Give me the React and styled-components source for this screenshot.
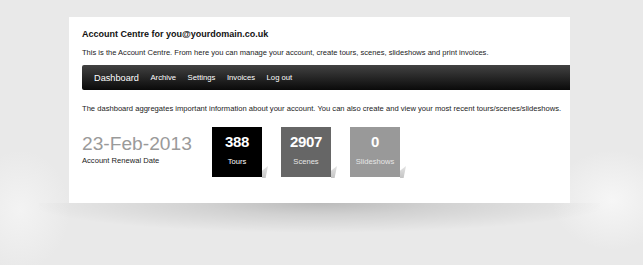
import React from 'react'
import styled, { createGlobalStyle } from 'styled-components'

const Global = createGlobalStyle`
  html, body {
    margin: 0;
    padding: 0;
  }
  body {
    width: 643px;
    height: 265px;
    overflow: hidden;
    font-family: "Liberation Sans", Arial, Helvetica, sans-serif;
    -webkit-font-smoothing: antialiased;
    background: radial-gradient(ellipse 60px 50px at 612px 200px, #f6f6f6 0%, rgba(246,246,246,0) 100%),
      radial-gradient(ellipse 50px 60px at 20px 210px, #f3f3f3 0%, rgba(243,243,243,0) 100%),
      #e9e9e9;
  }
`

const Page = styled.div`
  padding: 17px 0 0 69px;
`

const Card = styled.div`
  position: relative;
  width: 501px;
  height: 186px;
  background: #fff;
  box-sizing: border-box;
  padding: 11px 0 0 13px;
  &::after {
    content: "";
    position: absolute;
    left: -30px;
    right: -30px;
    top: 100%;
    height: 30px;
    background: radial-gradient(ellipse 52% 100% at 50% 0%, rgba(0,0,0,0.2) 0%, rgba(0,0,0,0.1) 40%, rgba(0,0,0,0) 100%);
    z-index: -1;
  }
`

const Heading = styled.h1`
  margin: 0;
  font-size: 9px;
  font-weight: bold;
  color: #111;
  line-height: 12px;
`

const Intro = styled.p`
  margin: 8px 0 0;
  font-size: 7.55px;
  color: #222;
  line-height: 10px;
`

const Nav = styled.nav`
  margin-top: 7px;
  height: 25px;
  display: flex;
  align-items: center;
  gap: 11.5px;
  padding-left: 12px;
  background: linear-gradient(#424242, #0a0a0a);
  border-radius: 2px 0 0 2px;
`

const NavLink = styled.a`
  color: #fff;
  font-size: ${p => (p.active ? '9.2px' : '7.7px')};
  text-decoration: none;
`

const Description = styled.p`
  margin: 14px 0 0;
  font-size: 7.6px;
  color: #222;
  line-height: 10px;
`

const Stats = styled.div`
  margin-top: 13px;
  display: flex;
  align-items: flex-start;
`

const DateBlock = styled.div`
  width: 130px;
  padding-top: 7px;
`

const DateValue = styled.div`
  font-size: 19.2px;
  color: #9a9a9a;
  line-height: 20px;
`

const DateLabel = styled.div`
  font-size: 7.6px;
  color: #222;
  margin-top: 2px;
`

const Boxes = styled.div`
  display: flex;
  gap: 19px;
`

const Box = styled.div`
  position: relative;
  width: 50px;
  height: 50px;
  background: ${p => p.bg};
  color: #fff;
  display: flex;
  flex-direction: column;
  align-items: center;
  padding-top: 6px;
  box-sizing: border-box;
  &::after {
    content: "";
    position: absolute;
    left: 100%;
    bottom: -1px;
    width: 6px;
    height: 12px;
    background: linear-gradient(#e4e4e4, #c4c4c4);
    clip-path: polygon(0 100%, 0 40%, 100% 0, 60% 100%);
  }
`

const Count = styled.div`
  font-size: 15px;
  font-weight: bold;
  line-height: 18px;
  letter-spacing: -0.3px;
`

const Label = styled.div`
  margin-top: 6px;
  font-size: 7.6px;
  color: ${p => p.muted ? '#e6e6e6' : '#fff'};
`

const stats = [
  { count: 388, label: 'Tours', bg: '#000' },
  { count: 2907, label: 'Scenes', bg: '#666' },
  { count: 0, label: 'Slideshows', bg: '#999' },
]

const App = () => {
  return (
    <Page>
      <Global />
      <Card>
        <Heading>Account Centre for you@yourdomain.co.uk</Heading>
        <Intro>This is the Account Centre. From here you can manage your account, create tours, scenes, slideshows and print invoices.</Intro>
        <Nav>
          <NavLink active>Dashboard</NavLink>
          <NavLink>Archive</NavLink>
          <NavLink>Settings</NavLink>
          <NavLink>Invoices</NavLink>
          <NavLink>Log out</NavLink>
        </Nav>
        <Description>The dashboard aggregates important information about your account. You can also create and view your most recent tours/scenes/slideshows.</Description>
        <Stats>
          <DateBlock>
            <DateValue>23-Feb-2013</DateValue>
            <DateLabel>Account Renewal Date</DateLabel>
          </DateBlock>
          <Boxes>
            {stats.map(s => (
              <Box key={s.label} bg={s.bg}>
                <Count>{s.count}</Count>
                <Label muted={s.bg !== '#000'}>{s.label}</Label>
              </Box>
            ))}
          </Boxes>
        </Stats>
      </Card>
    </Page>
  )
}

export default App
